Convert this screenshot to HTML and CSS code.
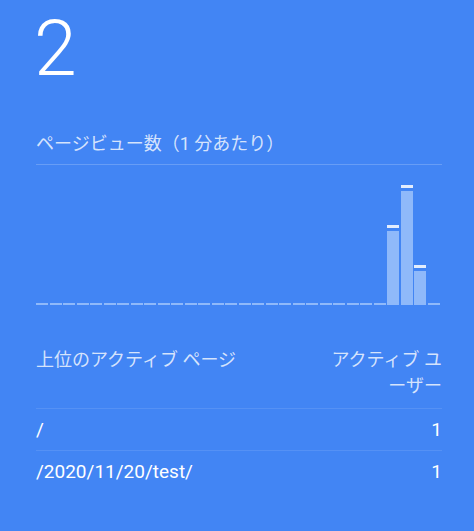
FILE: index.html
```html
<!DOCTYPE html>
<html lang="ja">
<head>
<meta charset="utf-8">
<link rel="stylesheet" href="styles.css">
</head>
<body>
<div class="card">
  <div class="big">2</div>
  <div class="title">ページビュー数（1 分あたり）</div>
  <div class="chart">
    <div class="bar"><i class="body z"></i></div>
    <div class="bar"><i class="body z"></i></div>
    <div class="bar"><i class="body z"></i></div>
    <div class="bar"><i class="body z"></i></div>
    <div class="bar"><i class="body z"></i></div>
    <div class="bar"><i class="body z"></i></div>
    <div class="bar"><i class="body z"></i></div>
    <div class="bar"><i class="body z"></i></div>
    <div class="bar"><i class="body z"></i></div>
    <div class="bar"><i class="body z"></i></div>
    <div class="bar"><i class="body z"></i></div>
    <div class="bar"><i class="body z"></i></div>
    <div class="bar"><i class="body z"></i></div>
    <div class="bar"><i class="body z"></i></div>
    <div class="bar"><i class="body z"></i></div>
    <div class="bar"><i class="body z"></i></div>
    <div class="bar"><i class="body z"></i></div>
    <div class="bar"><i class="body z"></i></div>
    <div class="bar"><i class="body z"></i></div>
    <div class="bar"><i class="body z"></i></div>
    <div class="bar"><i class="body z"></i></div>
    <div class="bar"><i class="body z"></i></div>
    <div class="bar"><i class="body z"></i></div>
    <div class="bar"><i class="body z"></i></div>
    <div class="bar"><i class="body z"></i></div>
    <div class="bar"><i class="body z"></i></div>
    <div class="bar"><i class="cap"></i><i class="body" style="height:74px"></i></div>
    <div class="bar"><i class="cap"></i><i class="body" style="height:114px"></i></div>
    <div class="bar"><i class="cap"></i><i class="body" style="height:34px"></i></div>
    <div class="bar"><i class="body z"></i></div>
  </div>
  <div class="table">
    <div class="row head">
      <div class="c1">上位のアクティブ ページ</div>
      <div class="c2">アクティブ ユーザー</div>
    </div>
    <div class="row">
      <div class="c1">/</div>
      <div class="c2">1</div>
    </div>
    <div class="row">
      <div class="c1">/2020/11/20/test/</div>
      <div class="c2">1</div>
    </div>
  </div>
</div>
</body>
</html>
```
FILE: styles.css
```css
html, body {
  margin: 0;
  padding: 0;
  background: #4285f4;
}
body {
  font-family: Roboto, "Noto Sans CJK JP", sans-serif;
  color: #fff;
  width: 474px;
  height: 531px;
  overflow: hidden;
}
.card {
  padding: 11px 32px 0 36px;
}
.big {
  font-size: 77px;
  font-weight: 300;
  line-height: 77px;
  height: 77px;
  margin-left: -2px;
}
.title {
  margin-top: 44px;
  font-size: 18px;
  line-height: 24px;
  color: rgba(255, 255, 255, 0.78);
  padding-bottom: 8px;
  border-bottom: 1px solid rgba(255, 255, 255, 0.2);
}
.chart {
  display: grid;
  grid-template-columns: repeat(30, 1fr);
  column-gap: 1.5px;
  align-items: end;
  width: 403.5px;
  height: 140px;
}
.bar {
  display: flex;
  flex-direction: column;
  justify-content: flex-end;
}
.bar i {
  display: block;
}
.cap {
  height: 3px;
  margin-bottom: 3px;
  background: #e3edfd;
}
.body {
  background: #8fb9fa;
}
.body.z {
  height: 2px;
}
.table {
  margin-top: 42px;
}
.row {
  display: flex;
  justify-content: space-between;
  align-items: flex-start;
  border-bottom: 1px solid rgba(255, 255, 255, 0.1);
  padding: 11px 0 10px;
  font-size: 19px;
  line-height: 20px;
}
.row:last-child {
  border-bottom: none;
}
.row.head {
  color: rgba(255, 255, 255, 0.78);
  font-size: 18px;
  line-height: 26px;
  padding: 0 0 9px;
}
.c1 {
  flex: 1;
}
.c2 {
  width: 122px;
  text-align: right;
}
```
